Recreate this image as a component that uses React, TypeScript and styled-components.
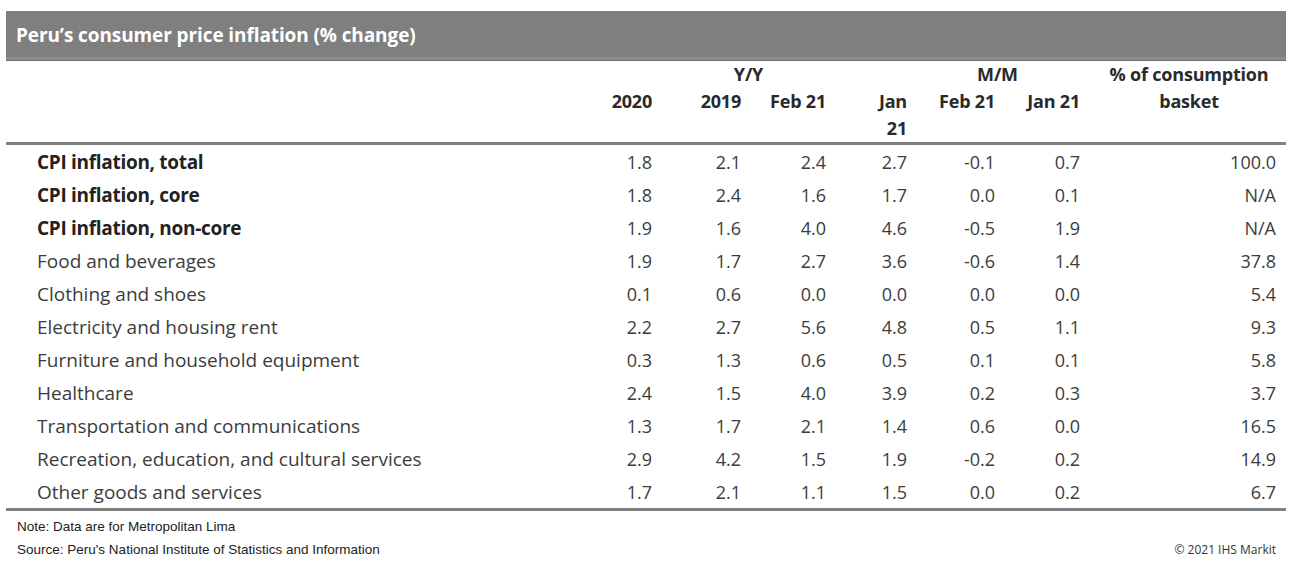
import { createGlobalStyle, styled } from 'styled-components';

const GlobalStyle = createGlobalStyle`
  body {
    margin: 0;
    background: #ffffff;
  }
`;

type Row = {
  label: string;
  bold?: boolean;
  values: string[];
};

const ROWS: Row[] = [
  { label: 'CPI inflation, total', bold: true, values: ['1.8', '2.1', '2.4', '2.7', '-0.1', '0.7', '100.0'] },
  { label: 'CPI inflation, core', bold: true, values: ['1.8', '2.4', '1.6', '1.7', '0.0', '0.1', 'N/A'] },
  { label: 'CPI inflation, non-core', bold: true, values: ['1.9', '1.6', '4.0', '4.6', '-0.5', '1.9', 'N/A'] },
  { label: 'Food and beverages', values: ['1.9', '1.7', '2.7', '3.6', '-0.6', '1.4', '37.8'] },
  { label: 'Clothing and shoes', values: ['0.1', '0.6', '0.0', '0.0', '0.0', '0.0', '5.4'] },
  { label: 'Electricity and housing rent', values: ['2.2', '2.7', '5.6', '4.8', '0.5', '1.1', '9.3'] },
  { label: 'Furniture and household equipment', values: ['0.3', '1.3', '0.6', '0.5', '0.1', '0.1', '5.8'] },
  { label: 'Healthcare', values: ['2.4', '1.5', '4.0', '3.9', '0.2', '0.3', '3.7'] },
  { label: 'Transportation and communications', values: ['1.3', '1.7', '2.1', '1.4', '0.6', '0.0', '16.5'] },
  { label: 'Recreation, education, and cultural services', values: ['2.9', '4.2', '1.5', '1.9', '-0.2', '0.2', '14.9'] },
  { label: 'Other goods and services', values: ['1.7', '2.1', '1.1', '1.5', '0.0', '0.2', '6.7'] },
];

const COLUMNS = '584px 70px 89px 85px 81px 88px 85px 198px';

const Page = styled.div`
  width: 1280px;
  padding: 11px 0 0 6px;
  font-family: 'Open Sans', 'Liberation Sans', sans-serif;
`;

const TitleBar = styled.div`
  box-sizing: border-box;
  height: 50px;
  display: flex;
  align-items: center;
  padding: 0 0 2px 10px;
  background-color: #7f7f7f;
  border-bottom: 1px solid #6e6e6e;
  box-shadow: inset 0 -3px 0 #8c8c8c;
  color: #ffffff;
  font-size: 19px;
  font-weight: 700;
  letter-spacing: -0.1px;
`;

const Grid = styled.div`
  display: grid;
  grid-template-columns: ${COLUMNS};
`;

const HeaderGrid = styled(Grid)`
  grid-auto-rows: 27px;
  border-bottom: 3px solid #808080;
  color: #2a2a2a;
  font-size: 18px;
  font-weight: 700;
  line-height: 27px;
  letter-spacing: -0.2px;
`;

const HeadCell = styled.div<{ $col: string; $row: string; $align?: string }>`
  grid-column: ${(p) => p.$col};
  grid-row: ${(p) => p.$row};
  text-align: ${(p) => p.$align ?? 'right'};
  padding-right: 8px;
`;

const BasketHead = styled.div`
  grid-column: 8;
  grid-row: 1 / span 2;
  text-align: center;
  padding-left: 4px;
`;

const Body = styled.div`
  border-bottom: 3px solid #808080;
`;

const BodyRow = styled(Grid)<{ $bold?: boolean }>`
  height: 33px;
  align-items: center;
  font-size: 18px;
  color: #3c3c3c;
`;

const Label = styled.div<{ $bold?: boolean }>`
  padding-left: 31px;
  white-space: nowrap;
  font-size: 19px;
  font-weight: ${(p) => (p.$bold ? 700 : 400)};
  color: ${(p) => (p.$bold ? '#222222' : '#3c3c3c')};
  letter-spacing: ${(p) => (p.$bold ? '-0.3px' : '0')};
`;

const Value = styled.div<{ $last?: boolean }>`
  text-align: right;
  padding-right: ${(p) => (p.$last ? '10px' : '8px')};
`;

const Footer = styled.div`
  display: flex;
  justify-content: space-between;
  align-items: flex-end;
  padding: 7px 10px 0 11px;
`;

const Notes = styled.div`
  display: flex;
  flex-direction: column;
  gap: 5px;
  font-family: 'Liberation Sans', Arial, sans-serif;
  font-size: 13.5px;
  line-height: 18px;
  color: #222222;
`;

const Copyright = styled.div`
  font-size: 12px;
  line-height: 18px;
  color: #333333;
`;

export default function App() {
  return (
    <>
      <GlobalStyle />
      <Page>
        <TitleBar>Peru’s consumer price inflation (% change)</TitleBar>
        <HeaderGrid>
          <HeadCell $col="2 / span 4" $row="1" $align="center">
            Y/Y
          </HeadCell>
          <HeadCell $col="6 / span 2" $row="1" $align="center">
            M/M
          </HeadCell>
          <BasketHead>
            % of consumption
            <br />
            basket
          </BasketHead>
          <HeadCell $col="2" $row="2">2020</HeadCell>
          <HeadCell $col="3" $row="2">2019</HeadCell>
          <HeadCell $col="4" $row="2">Feb 21</HeadCell>
          <HeadCell $col="5" $row="2 / span 2">
            Jan
            <br />
            21
          </HeadCell>
          <HeadCell $col="6" $row="2">Feb 21</HeadCell>
          <HeadCell $col="7" $row="2">Jan 21</HeadCell>
        </HeaderGrid>
        <Body>
          {ROWS.map((row) => (
            <BodyRow key={row.label}>
              <Label $bold={row.bold}>{row.label}</Label>
              {row.values.map((v, i) => (
                <Value key={i} $last={i === row.values.length - 1}>
                  {v}
                </Value>
              ))}
            </BodyRow>
          ))}
        </Body>
        <Footer>
          <Notes>
            <span>Note: Data are for Metropolitan Lima</span>
            <span>Source: Peru's National Institute of Statistics and Information</span>
          </Notes>
          <Copyright>© 2021 IHS Markit</Copyright>
        </Footer>
      </Page>
    </>
  );
}
